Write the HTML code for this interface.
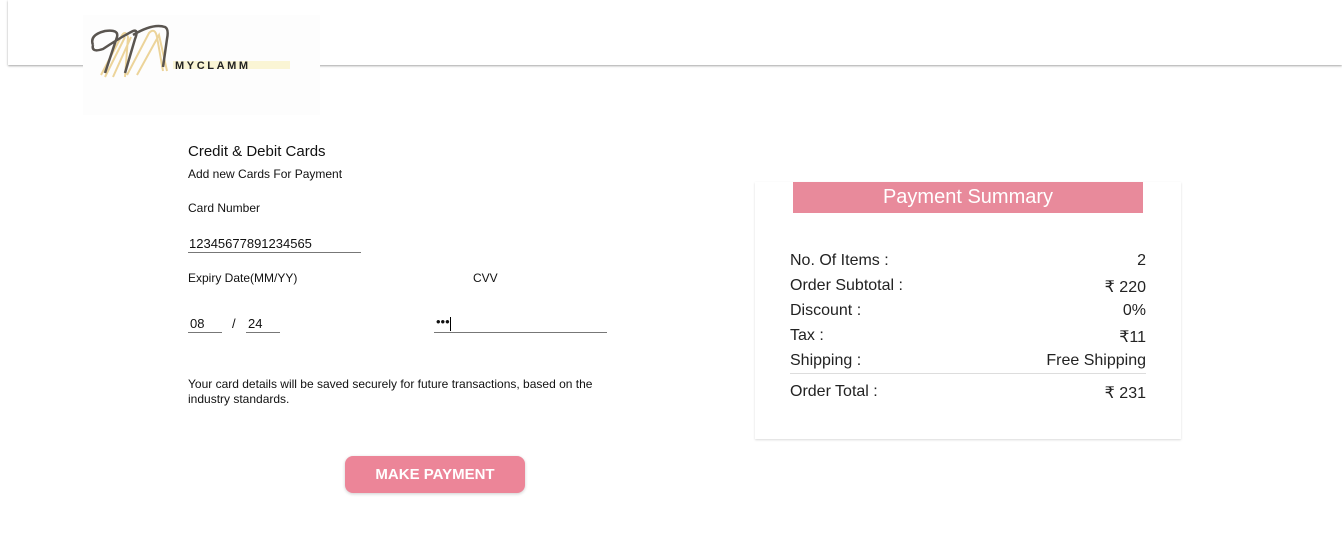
<!DOCTYPE html>
<html><head><style>
*{margin:0;padding:0;box-sizing:border-box}
body{width:1342px;height:533px;background:#fff;font-family:"Liberation Sans",Arial,sans-serif;position:relative;overflow:hidden;color:#111}
.a{position:absolute;white-space:nowrap}
.hdr{position:absolute;left:8px;top:0;width:1334px;height:65px;background:#fff;box-shadow:0 1px 2px rgba(0,0,0,.35)}
.logo{position:absolute;left:83px;top:15px;width:237px;height:100px;background:#fdfdfd}
.ul{position:absolute;border-bottom:1px solid #777}
.sum{position:absolute;left:755px;top:182px;width:426px;height:257px;box-shadow:0 1px 2px rgba(0,0,0,.15)}
.row{position:absolute;left:35px;width:356px;font-size:16px;color:#222;display:flex;justify-content:space-between}
</style></head><body>
<div class="hdr"></div>
<div class="logo">
<svg width="237" height="100" viewBox="0 0 237 100">
<g fill="none" stroke="#ecd49a" stroke-width="2">
<path d="M18 60 L38 22 Q42 14 45 22 L42 62 M44 60 L66 18 Q72 12 74 22 L80 56 M30 62 L48 22 M54 60 L76 20 L84 56 M22 62 L42 22"/>
</g>
<g fill="none" stroke="#5a5550" stroke-width="2.5">
<path d="M10 30 Q6 20 22 16 Q36 14 34 22 L22 58 M10 30 Q8 38 20 34 Q38 22 50 16 Q56 14 52 24 L42 58 M50 20 Q70 8 82 12 Q86 14 84 24 L80 52"/>
</g>
<rect x="90" y="46" width="117" height="8" fill="#f3e58a" opacity=".35"/>
<text x="92" y="54" font-family="Liberation Sans" font-weight="bold" font-size="11" fill="#222" letter-spacing="2.6">MYCLAMM</text>
</svg>
</div>
<div class="a" style="left:188px;top:143px;font-size:15px">Credit &amp; Debit Cards</div>
<div class="a" style="left:188px;top:167px;font-size:12px">Add new Cards For Payment</div>
<div class="a" style="left:188px;top:201px;font-size:12px">Card Number</div>
<div class="a" style="left:189px;top:236px;font-size:13px">12345677891234565</div>
<div class="ul" style="left:188px;top:236px;width:173px;height:17px"></div>
<div class="a" style="left:188px;top:271px;font-size:12px">Expiry Date(MM/YY)</div>
<div class="a" style="left:473px;top:271px;font-size:12px">CVV</div>
<div class="a" style="left:190px;top:316px;font-size:13px">08</div>
<div class="ul" style="left:188px;top:316px;width:34px;height:17px"></div>
<div class="a" style="left:232px;top:316px;font-size:13px">/</div>
<div class="a" style="left:248px;top:316px;font-size:13px">24</div>
<div class="ul" style="left:246px;top:316px;width:34px;height:17px"></div>
<div class="a" style="left:436px;top:314px;font-size:13px">•••</div>
<div style="position:absolute;left:450px;top:317px;width:1px;height:14px;background:#000"></div>
<div class="ul" style="left:434px;top:316px;width:173px;height:17px"></div>
<div class="a" style="left:188px;top:377px;font-size:12px;line-height:15px;white-space:normal;width:445px">Your card details will be saved securely for future transactions, based on the industry standards.</div>
<div style="position:absolute;left:345px;top:456px;width:180px;height:37px;background:#ec8598;border-radius:8px;color:#fff;font-weight:bold;font-size:15px;text-align:center;line-height:37px;box-shadow:0 1px 3px rgba(0,0,0,.2)">MAKE PAYMENT</div>
<div class="sum">
<div style="position:absolute;left:38px;top:0;width:350px;height:31px;background:#e88a9b;color:#fff;font-size:20px;text-align:center;line-height:31px">Payment Summary</div>
<div class="row" style="top:70px"><span>No. Of Items :</span><span>2</span></div>
<div class="row" style="top:95px"><span>Order Subtotal :</span><span>₹ 220</span></div>
<div class="row" style="top:120px"><span>Discount :</span><span>0%</span></div>
<div class="row" style="top:145px"><span>Tax :</span><span>₹11</span></div>
<div class="row" style="top:170px"><span>Shipping :</span><span>Free Shipping</span></div>
<div style="position:absolute;left:35px;top:191px;width:356px;height:1px;background:#ddd"></div>
<div class="row" style="top:201px"><span>Order Total :</span><span>₹ 231</span></div>
</div>
</body></html>
